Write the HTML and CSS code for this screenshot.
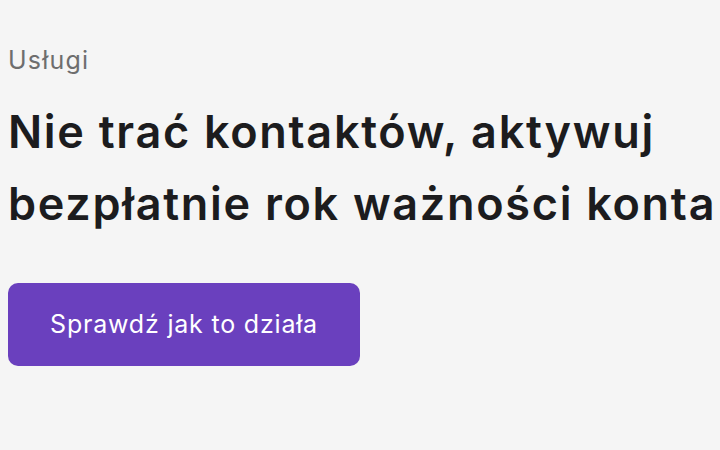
FILE: index.html
```html
<!DOCTYPE html>
<html>
<head>
    <meta charset="utf-8">
    <title>Usługi</title>
    <link rel="stylesheet" href="styles.css">
</head>
<body>
    <section class="hero">
        <p class="hero-label">Usługi</p>
        <h1 class="hero-title">Nie trać kontaktów, aktywuj<br>bezpłatnie rok ważności konta</h1>
        <a href="#" class="hero-button">Sprawdź jak to działa</a>
    </section>
</body>
</html>
```

FILE: styles.css
```css
html, body {
    margin: 0;
    height: 100%;
    overflow: hidden;
}

body {
    background-color: #f5f5f5;
    font-family: Inter, "Noto Sans", sans-serif;
}

.hero {
    padding: 44px 8px 0 8px;
}

.hero-label {
    margin: 0;
    font-size: 25px;
    letter-spacing: 1.2px;
    color: #6e6e6e;
    line-height: 32px;
}

.hero-title {
    margin: 20px 0 0 0;
    font-size: 45px;
    font-weight: 600;
    letter-spacing: 1.7px;
    line-height: 72px;
    color: #1c1c1e;
    white-space: nowrap;
}

.hero-button {
    display: inline-block;
    margin-top: 43px;
    width: 352px;
    height: 83px;
    line-height: 83px;
    text-align: center;
    box-sizing: border-box;
    background-color: #6a40be;
    color: #ffffff;
    font-size: 25px;
    letter-spacing: 0.8px;
    text-decoration: none;
    border-radius: 10px;
}
```
